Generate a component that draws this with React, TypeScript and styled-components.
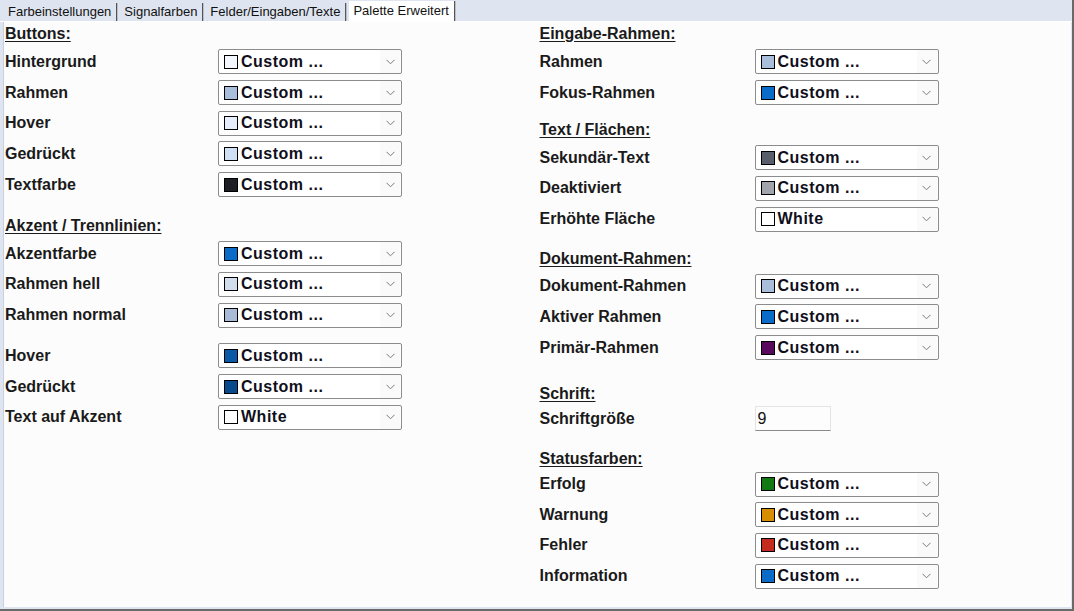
import styled, { createGlobalStyle } from "styled-components";

const GlobalStyle = createGlobalStyle`
  html, body {
    margin: 0;
    padding: 0;
    background: #fcfcfc;
  }
  * {
    box-sizing: border-box;
  }
`;

type Row = { label: string; color?: string; value?: string; input?: string };
type Section = { title?: string; top: number; headGap?: number; rows: Row[] };

const leftSections: Section[] = [
  {
    title: "Buttons:",
    top: 0,
    rows: [
      { label: "Hintergrund", color: "#f4f8fe" },
      { label: "Rahmen", color: "#a8bedb" },
      { label: "Hover", color: "#e5eefa" },
      { label: "Gedrückt", color: "#cfdff4" },
      { label: "Textfarbe", color: "#1e1f24" },
    ],
  },
  {
    title: "Akzent / Trennlinien:",
    top: 16,
    rows: [
      { label: "Akzentfarbe", color: "#0a6cc8" },
      { label: "Rahmen hell", color: "#d2ddec" },
      { label: "Rahmen normal", color: "#a7bbd7" },
    ],
  },
  {
    top: 10,
    rows: [
      { label: "Hover", color: "#0b5aa8" },
      { label: "Gedrückt", color: "#084a8c" },
      { label: "Text auf Akzent", color: "#ffffff", value: "White" },
    ],
  },
];

const rightSections: Section[] = [
  {
    title: "Eingabe-Rahmen:",
    top: 0,
    rows: [
      { label: "Rahmen", color: "#a8bedb" },
      { label: "Fokus-Rahmen", color: "#0a6cc8" },
    ],
  },
  {
    title: "Text / Flächen:",
    top: 12,
    rows: [
      { label: "Sekundär-Text", color: "#5a5e6b" },
      { label: "Deaktiviert", color: "#a2a4ab" },
      { label: "Erhöhte Fläche", color: "#ffffff", value: "White" },
    ],
  },
  {
    title: "Dokument-Rahmen:",
    top: 15,
    headGap: 1.5,
    rows: [
      { label: "Dokument-Rahmen", color: "#a8bedb" },
      { label: "Aktiver Rahmen", color: "#0a6cc8" },
      { label: "Primär-Rahmen", color: "#5a0a5c" },
    ],
  },
  {
    title: "Schrift:",
    top: 20.5,
    headGap: 0,
    rows: [{ label: "Schriftgröße", input: "9" }],
  },
  {
    title: "Statusfarben:",
    top: 14.5,
    headGap: 0,
    rows: [
      { label: "Erfolg", color: "#137a13" },
      { label: "Warnung", color: "#d88c00" },
      { label: "Fehler", color: "#c42b1c" },
      { label: "Information", color: "#0a6cc8" },
    ],
  },
];

const tabs = ["Farbeinstellungen", "Signalfarben", "Felder/Eingaben/Texte", "Palette Erweitert"];

const Chevron = () => (
  <svg width="9" height="6" viewBox="0 0 9 6">
    <path d="M0.5 0.8 L4.5 4.8 L8.5 0.8" fill="none" stroke="#7a7a7a" strokeWidth="1" />
  </svg>
);

const Column = ({
  sections,
  labelWidth,
  inset,
}: {
  sections: Section[];
  labelWidth: number;
  inset: number;
}) => (
  <ColumnBox inset={inset}>
    {sections.map((section, i) => (
      <SectionBox key={i} top={section.top}>
        {section.title && (
          <Heading gap={section.headGap ?? 2.5}>{section.title}</Heading>
        )}
        {section.rows.map((row, j) => (
          <RowBox key={j}>
            <Label width={labelWidth}>{row.label}</Label>
            {row.input !== undefined ? (
              <TextInput>{row.input}</TextInput>
            ) : (
              <Dropdown>
                <Swatch color={row.color || "#fff"} />
                <Value>{row.value || "Custom ..."}</Value>
                <ArrowArea>
                  <Chevron />
                </ArrowArea>
              </Dropdown>
            )}
          </RowBox>
        ))}
      </SectionBox>
    ))}
  </ColumnBox>
);

export default function App() {
  return (
    <>
      <GlobalStyle />
      <Window>
        <TabBar>
          {tabs.map((tab, i) => (
            <Tab key={i} active={i === tabs.length - 1}>
              {tab}
            </Tab>
          ))}
        </TabBar>
        <Panel>
          <Column sections={leftSections} labelWidth={213} inset={1} />
          <Column sections={rightSections} labelWidth={215} inset={2} />
        </Panel>
      </Window>
    </>
  );
}

const Window = styled.div`
  width: 1074px;
  height: 611px;
  display: flex;
  flex-direction: column;
  background: #dfe5f0;
  border-right: 2px solid #6a6a6a;
  border-bottom: 2px solid #6a6a6a;
  font-family: "Liberation Sans", Arial, sans-serif;
`;

const TabBar = styled.div`
  height: 22px;
  display: flex;
  align-items: flex-end;
  padding-left: 4px;
  border-bottom: 1px solid #ffffff;
`;

const Tab = styled.div<{ active?: boolean }>`
  height: ${(p) => (p.active ? "20px" : "18px")};
  display: flex;
  align-items: center;
  padding: 0 5px 1px 4px;
  margin-right: 3px;
  font-size: 13px;
  color: #111;
  background: ${(p) => (p.active ? "#ffffff" : "transparent")};
  border-right: 1px solid #555;
  box-shadow: 1px 0 0 #b9bec8;
`;

const Panel = styled.div`
  flex: 1;
  display: flex;
  padding-top: 2px;
  margin: 0 1px 2px 3px;
  background: #fcfcfc;
  border-left: 1px solid #c9d0dc;
`;

const ColumnBox = styled.div<{ inset: number }>`
  width: 536px;
  padding-left: ${(p) => p.inset}px;
  display: flex;
  flex-direction: column;
`;

const SectionBox = styled.div<{ top: number }>`
  margin-top: ${(p) => p.top}px;
  display: flex;
  flex-direction: column;
`;

const Heading = styled.div<{ gap: number }>`
  height: 20px;
  line-height: 20px;
  margin-bottom: ${(p) => p.gap}px;
  font-size: 16px;
  font-weight: 700;
  color: #1a1a1a;
  text-decoration: underline;
  text-underline-offset: 2px;
`;

const RowBox = styled.div`
  height: 30.7px;
  display: flex;
  align-items: center;
`;

const Label = styled.div<{ width: number }>`
  width: ${(p) => p.width}px;
  font-size: 16px;
  font-weight: 700;
  color: #1a1a1a;
`;

const Dropdown = styled.div`
  width: 184px;
  height: 25px;
  display: flex;
  align-items: center;
  padding-left: 5px;
  background: #ffffff;
  border: 1px solid #8c8c8c;
  border-radius: 2px;
`;

const Swatch = styled.div<{ color: string }>`
  width: 14px;
  height: 14px;
  background: ${(p) => p.color};
  border: 1px solid #000;
  margin-right: 3px;
  flex-shrink: 0;
`;

const Value = styled.div`
  flex: 1;
  font-size: 16px;
  font-weight: 700;
  letter-spacing: 0.5px;
  color: #10101c;
  white-space: nowrap;
`;

const ArrowArea = styled.div`
  width: 20px;
  height: 100%;
  display: flex;
  align-items: center;
  justify-content: center;
  background: #fafafa;
  margin-right: 1px;
`;

const TextInput = styled.div`
  width: 76px;
  height: 25px;
  display: flex;
  align-items: center;
  padding-left: 2px;
  font-size: 16px;
  color: #111;
  background: #fdfdfd;
  border: 1px solid #e4e4e4;
  border-bottom-color: #8a8a8a;
`;
